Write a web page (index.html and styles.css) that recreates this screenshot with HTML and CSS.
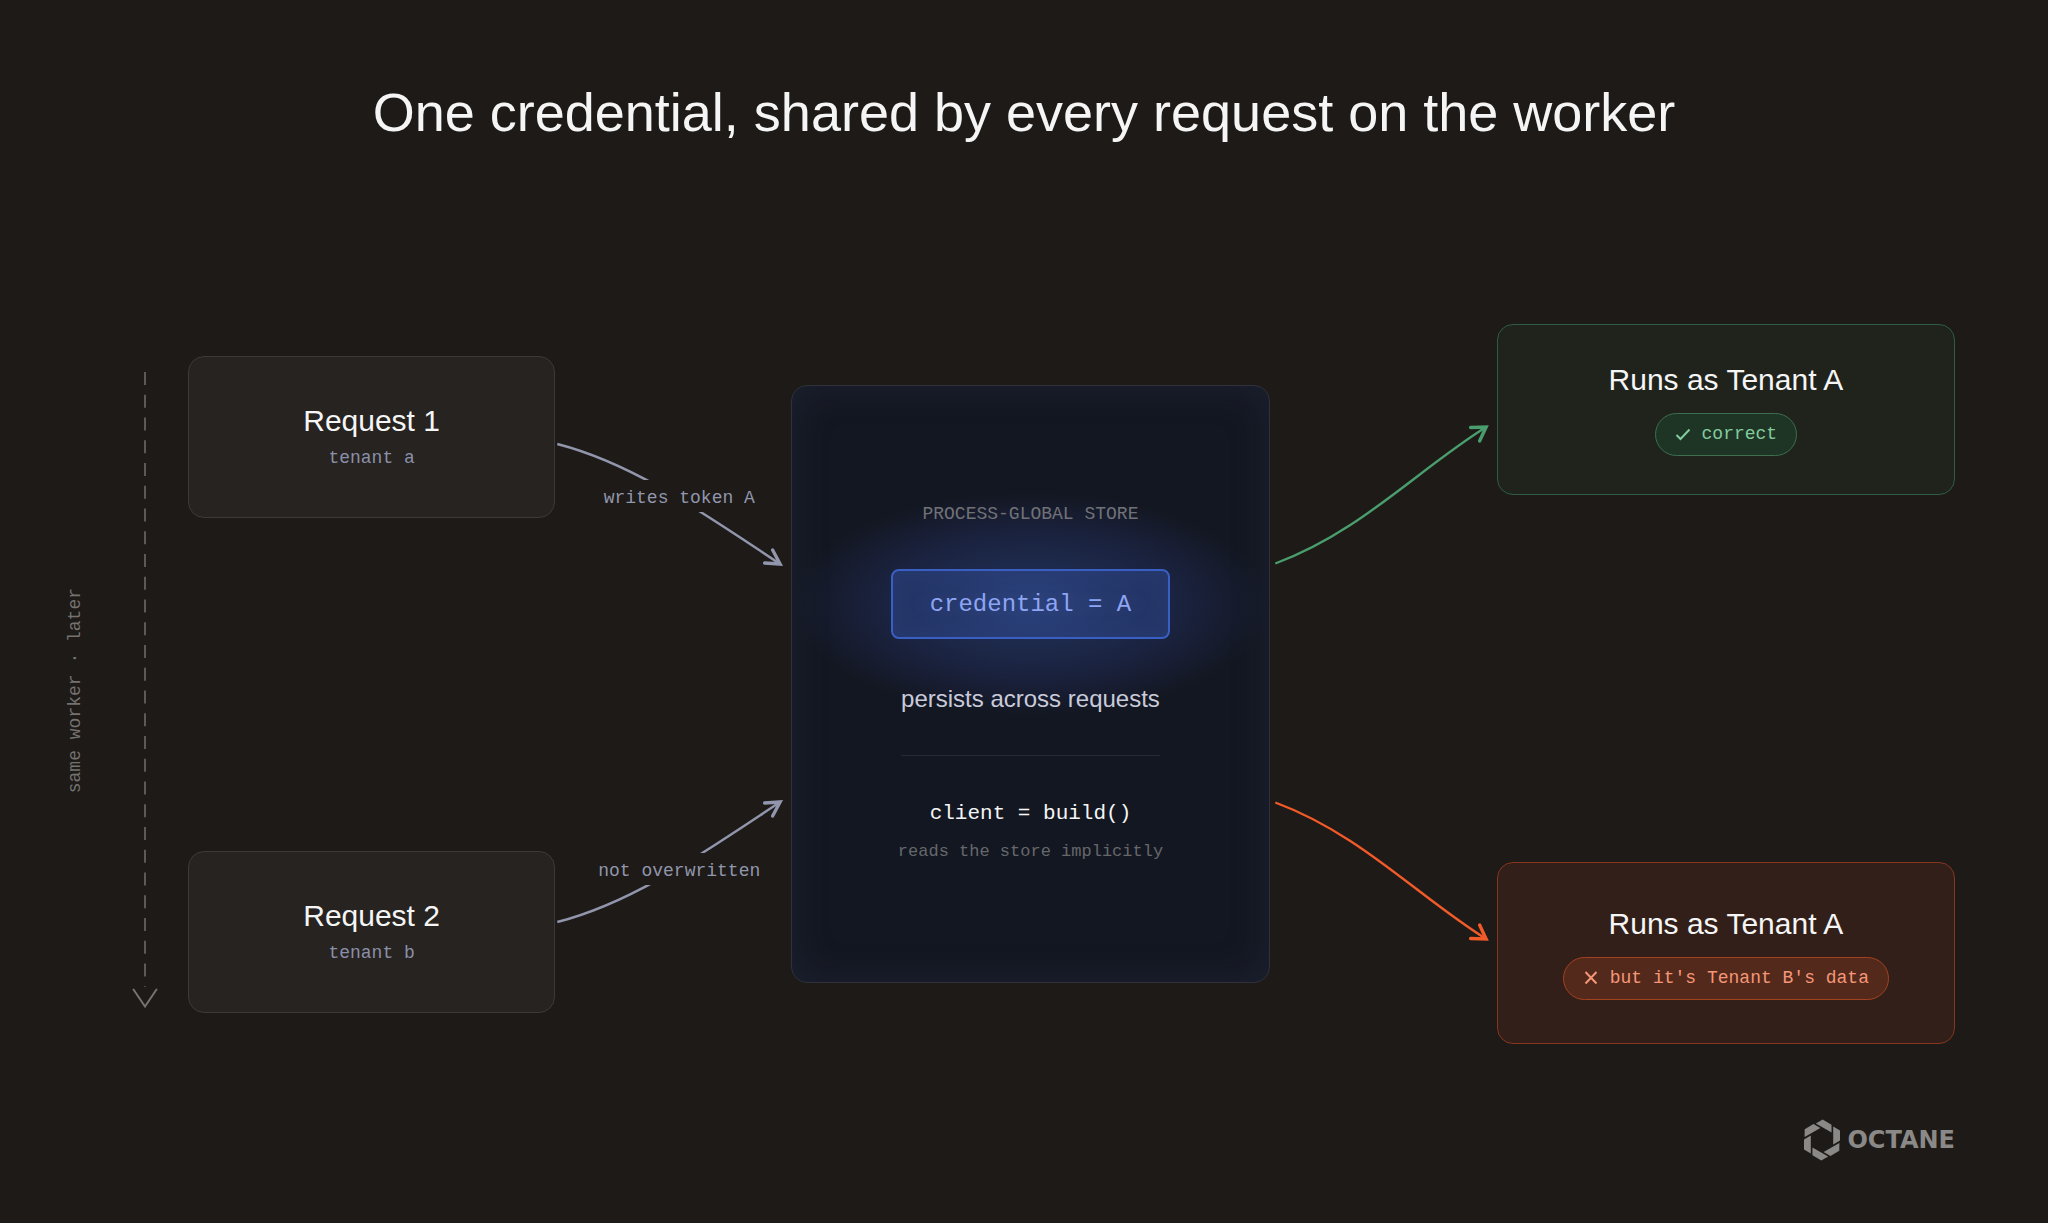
FILE: index.html
```html
<!DOCTYPE html>
<html lang="en">

<head>
    <meta charset="UTF-8">
    <meta name="viewport" content="width=device-width, initial-scale=1">
    <title>One credential, shared by every request on the worker</title>
    <link rel="stylesheet" href="styles.css">
</head>

<body>
    <main class="page">
        <h1 class="title">One credential, shared by every request on the worker</h1>

        <div class="diagram">
            <div class="timeline">
                <span class="timeline-label">same worker · later</span>
                <div class="rail">
                    <svg class="rail-line" aria-hidden="true">
                        <line x1="13" y1="0" x2="13" y2="100%" />
                    </svg>
                    <svg class="rail-head" viewBox="0 0 26 22" aria-hidden="true">
                        <path d="M1.5 2.5 13 19.5 24.5 2.5" />
                    </svg>
                </div>
            </div>

            <div class="requests">
                <section class="card request">
                    <h2 class="card-title">Request 1</h2>
                    <p class="tenant">tenant a</p>
                </section>
                <section class="card request">
                    <h2 class="card-title">Request 2</h2>
                    <p class="tenant">tenant b</p>
                </section>
            </div>

            <div class="links">
                <div class="link">
                    <svg viewBox="0 0 236 144" preserveAspectRatio="none" aria-hidden="true">
                        <path d="M2.3 20C78 39.5 145 87 225 140" />
                        <path class="head" d="M209.5 139 225 140 217.5 126" />
                    </svg>
                    <span class="link-label">writes token A</span>
                </div>
                <div class="link">
                    <svg viewBox="0 0 236 144" preserveAspectRatio="none" aria-hidden="true">
                        <path d="M2.3 125C78 105.5 145 58 225 5" />
                        <path class="head" d="M209.5 6 225 5 217.5 19" />
                    </svg>
                    <span class="link-label">not overwritten</span>
                </div>
            </div>

            <section class="store">
                <p class="store-caption">PROCESS-GLOBAL STORE</p>
                <code class="credential">credential = A</code>
                <p class="persists">persists across requests</p>
                <code class="client">client = build()</code>
                <p class="store-note">reads the store implicitly</p>
            </section>

            <div class="links">
                <div class="link link-good">
                    <svg viewBox="0 0 227 144" preserveAspectRatio="none" aria-hidden="true">
                        <path d="M5.3 139.5C90 108 146 47 216 3" />
                        <path class="head" d="M200.5 3.5 216 3 209.5 17" />
                    </svg>
                </div>
                <div class="link link-bad">
                    <svg viewBox="0 0 227 144" preserveAspectRatio="none" aria-hidden="true">
                        <path d="M5.3 5.5C90 37 146 98 216 142" />
                        <path class="head" d="M200.5 141.5 216 142 209.5 128" />
                    </svg>
                </div>
            </div>

            <div class="outcomes">
                <section class="card outcome outcome-good">
                    <h2 class="card-title">Runs as Tenant A</h2>
                    <span class="badge badge-good">
                        <svg class="badge-icon" viewBox="0 0 16 16" aria-hidden="true">
                            <path d="M1.5 8 5.5 12 14.5 2.5" />
                        </svg>
                        correct
                    </span>
                </section>
                <section class="card outcome outcome-bad">
                    <h2 class="card-title">Runs as Tenant A</h2>
                    <span class="badge badge-bad">
                        <svg class="badge-icon" viewBox="0 0 16 16" aria-hidden="true">
                            <path d="M2.5 2 13.5 13.5M13.5 2 2.5 13.5" />
                        </svg>
                        but it's Tenant B's data
                    </span>
                </section>
            </div>
        </div>

        <footer class="brand">
            <!-- six identical blades around the centre -->
            <svg class="brand-mark" viewBox="-19 -21 38 42" aria-hidden="true">
                <path id="blade" d="M11.2-13.6 18-9.6V.6L11.2 4.600z" />
                <use href="#blade" transform="rotate(60)" />
                <use href="#blade" transform="rotate(120)" />
                <use href="#blade" transform="rotate(180)" />
                <use href="#blade" transform="rotate(240)" />
                <use href="#blade" transform="rotate(300)" />
            </svg>
            <span class="brand-name">OCTANE</span>
        </footer>
    </main>
</body>

</html>
```
FILE: styles.css
```css
* {
    box-sizing: border-box;
}

body {
    margin: 0;
    background: #1d1a17;
    color: #f5f5f5;
    font-family: "Liberation Sans", Arial, sans-serif;
}

h1,
h2,
p {
    margin: 0;
    font-weight: normal;
}

.page {
    padding: 80px 93px 60px 64px;
}

.title {
    padding-left: 29px;
    font-size: 54px;
    line-height: 64px;
    text-align: center;
    margin-left: 0;
}

/* timeline | requests | links | store | links | outcomes */
.diagram {
    display: grid;
    grid-template-columns: auto 367fr 236fr 478fr 227fr 458fr;
    margin-top: 180px;
    min-height: 720px;
}

.timeline {
    display: flex;
    align-items: center;
    gap: 46px;
    padding: 48px 30px 35px 0;
}

.timeline-label {
    writing-mode: vertical-rl;
    transform: rotate(180deg);
    font-family: "Liberation Mono", monospace;
    font-size: 18px;
    line-height: 22px;
    color: #757370;
}

.rail {
    align-self: stretch;
    display: flex;
    flex-direction: column;
    width: 26px;
}

.rail-line {
    flex: 1;
    width: 26px;
    min-height: 0;
    stroke: #5c5a58;
    stroke-width: 2;
    stroke-dasharray: 13 9.75;
}

.rail-head {
    width: 26px;
    height: 22px;
    fill: none;
    stroke: #757370;
    stroke-width: 2;
    stroke-linecap: round;
}

.requests,
.links,
.outcomes {
    display: flex;
    flex-direction: column;
    justify-content: space-between;
}

.requests {
    padding: 32px 0 31px;
}

.links {
    padding: 100px 0 103px;
}

.card {
    display: flex;
    flex-direction: column;
    align-items: center;
    justify-content: center;
    border: 1px solid #3c3a38;
    border-radius: 16px;
    background: #262320;
}

.card-title {
    font-size: 30px;
    line-height: 34px;
}

.request {
    gap: 8px;
    min-height: 162px;
}

.tenant {
    font-family: "Liberation Mono", monospace;
    font-size: 18px;
    line-height: 24px;
    color: #8b8fa8;
}

.link {
    display: grid;
    height: 144px;
    color: #9196ac;
}

.link svg {
    grid-area: 1 / 1;
    width: 100%;
    height: 144px;
    overflow: visible;
    fill: none;
    stroke: currentColor;
    stroke-width: 2.4;
}

.link .head {
    stroke-width: 3.4;
    stroke-linejoin: miter;
    stroke-linecap: round;
}

.link-good {
    color: #4a9d6c;
}

.link-bad {
    color: #f15a29;
}

.link-label {
    grid-area: 1 / 1;
    place-self: center;
    position: relative;
    padding: 6px 0 2px 12px;
    background: #1d1a17;
    font-family: "Liberation Mono", monospace;
    font-size: 18px;
    line-height: 24px;
    white-space: nowrap;
}

.store {
    align-self: center;
    display: flex;
    flex-direction: column;
    align-items: center;
    min-height: 598px;
    padding: 116px 24px 112px;
    border: 1px solid #30313b;
    border-radius: 16px;
    background: radial-gradient(ellipse 240px 112px at 50% 218px, #263965 0%, #1e2a4c 35%, #1a2340 60%, #171c30 82%, transparent 100%), #131721;
    box-shadow: inset 0 0 40px rgba(72, 74, 110, 0.2);
}

.store-caption {
    font-family: "Liberation Mono", monospace;
    font-size: 18px;
    line-height: 24px;
    color: #717277;
}

.credential {
    margin-top: 43px;
    padding: 21px 37px 19px;
    border: 2px solid #3a5fc4;
    border-radius: 8px;
    background: rgba(52, 82, 165, 0.36);
    box-shadow: inset 0 0 24px rgba(70, 104, 200, 0.14);
    font-family: "Liberation Mono", monospace;
    font-size: 24px;
    line-height: 26px;
    color: #8ea5f4;
}

.persists {
    padding: 46px 0 42px;
    border-bottom: 1px solid #272a35;
    font-size: 24px;
    line-height: 28px;
    color: #c9cbdb;
}

.client {
    margin-top: 44px;
    font-family: "Liberation Mono", monospace;
    font-size: 21px;
    line-height: 28px;
}

.store-note {
    margin-top: 12px;
    font-family: "Liberation Mono", monospace;
    font-size: 17px;
    line-height: 24px;
    color: #66676b;
}

.outcome {
    gap: 16px;
}

.outcome-good {
    min-height: 171px;
    border-color: #2f5c43;
    background: #1f231c;
}

.outcome-bad {
    min-height: 182px;
    border-color: #85361d;
    background: #321f1a;
}

.badge {
    display: flex;
    align-items: center;
    gap: 11px;
    padding: 8px 19px;
    border: 1px solid;
    border-radius: 22px;
    font-family: "Liberation Mono", monospace;
    font-size: 18px;
    line-height: 25px;
}

.badge-good {
    border-color: #3d6e50;
    background: #1e3526;
    color: #83cb9d;
}

.badge-bad {
    border-color: #a3421f;
    background: #53291b;
    color: #f59678;
}

.badge-icon {
    width: 16px;
    height: 16px;
    fill: none;
    stroke: currentColor;
    stroke-width: 2;
}

.brand {
    display: flex;
    align-items: center;
    justify-content: flex-end;
    gap: 6px;
    margin-top: 75px;
    color: #8b8987;
}

.brand-mark {
    width: 38px;
    height: 42px;
    fill: currentColor;
}

.brand-name {
    font-family: "DejaVu Sans", sans-serif;
    font-size: 24px;
    font-weight: bold;
    line-height: 28px;
}
```
